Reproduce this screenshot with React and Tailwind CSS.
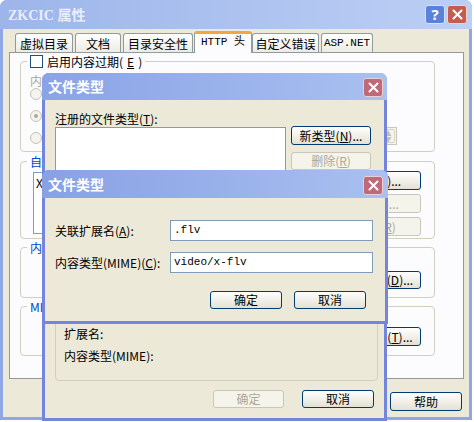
import React from 'react'

const ui = "font-['Noto_Sans_CJK_SC','Noto_Sans',sans-serif] text-[12px] leading-[13px]"

function Btn({ children, disabled, className = '' }) {
  return (
    <div
      className={`flex items-center justify-center rounded-[3px] border text-[12px] leading-none ${
        disabled
          ? 'border-[#c9c7ba] bg-[#f5f4ea] text-[#aca899]'
          : 'border-[#003c74] bg-gradient-to-b from-white to-[#e4e1d3] text-black'
      } ${className}`}
    >
      {children}
    </div>
  )
}

function CloseBox({ tone = 'mauve' }) {
  return (
    <div
      className={`flex h-[19px] w-[20px] items-center justify-center rounded-[3px] border ${
        tone === 'red' ? 'border-[#f1d2cc] bg-[#c65b52]' : 'border-[#e9cfd6] bg-[#bd6b78]'
      }`}
    >
      <svg width="11" height="11" viewBox="0 0 11 11">
        <path d="M1.5 1.5 L9.5 9.5 M9.5 1.5 L1.5 9.5" stroke="white" strokeWidth="2" strokeLinecap="round" />
      </svg>
    </div>
  )
}

function HelpBox() {
  return (
    <div className="flex h-[19px] w-[20px] items-center justify-center rounded-[3px] border border-[#d6e2fa] bg-[#5a82dc] text-[15px] font-bold leading-none text-white">
      ?
    </div>
  )
}

function Radio({ checked }) {
  return (
    <div className="flex h-[12px] w-[12px] items-center justify-center rounded-full border border-[#c4c2b8] bg-[#f4f3ee]">
      {checked && <div className="h-[4px] w-[4px] rounded-full bg-[#aca899]" />}
    </div>
  )
}

function Group({ title, className = '', children, titleClass = 'text-[#0046d5]' }) {
  return (
    <fieldset className={`ml-[10px] w-[415px] rounded-[4px] border border-[#d0d0bf] ${className}`}>
      <legend className={`ml-[6px] px-[3px] ${titleClass}`}>{title}</legend>
      {children}
    </fieldset>
  )
}

const tabs = [
  { label: '虚拟目录', w: 'w-[58px]', ml: 'ml-[12px]' },
  { label: '文档', w: 'w-[46px]', ml: 'ml-[2px]' },
  { label: '目录安全性', w: 'w-[70px]', ml: 'ml-[2px]' },
  { label: 'HTTP 头', w: 'w-[58px]', ml: 'ml-[1px]', active: true },
  { label: '自定义错误', w: 'w-[67px]', ml: 'ml-[0px]' },
  { label: 'ASP.NET', w: 'w-[52px]', ml: 'ml-[2px]' },
]

function OuterWindow() {
  return (
    <div className="absolute left-0 top-0 flex h-[420px] w-[472px] flex-col rounded-t-[7px] bg-[#8ea7e5]">
      <div className="flex h-[29px] items-center rounded-t-[7px] bg-gradient-to-r from-[#9db5ea] to-[#bccff4] pl-[8px] pr-[5px]">
        <span className="font-['Liberation_Serif','Noto_Sans_CJK_SC',serif] text-[14px] font-bold text-[#e9eefb]">
          ZKCIC <span className="font-['Noto_Sans_CJK_SC',sans-serif]">属性</span>
        </span>
        <div className="ml-auto flex gap-[2px]">
          <HelpBox />
          <CloseBox tone="red" />
        </div>
      </div>
      <div className={`mx-[3px] mb-[3px] flex flex-1 flex-col bg-[#ece9d8] ${ui}`}>
        {/* tabs */}
        <div className="mt-[2px] flex h-[22px] items-end">
          {tabs.map((t) =>
            t.active ? (
              <div
                key={t.label}
                className={`relative z-10 flex h-[22px] ${t.w} ${t.ml} items-start justify-center rounded-t-[3px] border-x border-t-[3px] border-x-[#919b9c] border-t-[#f2a73c] bg-[#fcfcfe] pt-[2px] font-['Liberation_Mono','Noto_Sans_CJK_SC',monospace] text-[11px]`}
              >
                {t.label}
              </div>
            ) : (
              <div
                key={t.label}
                className={`mb-[1px] flex h-[19px] ${t.w} ${t.ml} items-center justify-center rounded-t-[3px] border-x border-t border-[#919b9c] bg-gradient-to-b from-white to-[#ecebe5] ${
                  t.label === 'ASP.NET' ? "font-['Liberation_Mono',monospace] text-[11px]" : ''
                }`}
              >
                {t.label}
              </div>
            )
          )}
        </div>
        {/* panel */}
        <div className="-mt-px ml-[6px] h-[327px] w-[455px] border border-[#919b9c] bg-[#fcfcfe]">
          <Group
            className="mt-[2px] h-[97px]"
            titleClass="text-black"
            title={
              <span className="flex items-center gap-[4px]">
                <span className="h-[13px] w-[13px] border border-[#1c5180] bg-white" />
                启用内容过期(<u>E</u>)
              </span>
            }
          >
            <div className="pl-[9px] pt-[6px] text-[#aca899]">内容应在以下时间后过期:</div>
            <div className="flex flex-col gap-[10px] pl-[9px] pt-[1px]">
              <Radio />
              <Radio checked />
              <Radio />
            </div>
            <div className="-mt-[17px] ml-[338px] flex h-[18px] w-[38px] items-center border border-[#c9c7ba] bg-[#f5f4ea]">
              <span className="pl-[2px] text-[#aca899]">0</span>
              <div className="ml-auto mr-[1px] flex h-[14px] w-[14px] flex-col items-center justify-center rounded-[2px] border border-[#d8d5c6] text-[7px] leading-[6px] text-[#c2bfb2]">
                <span>▲</span>
                <span>▼</span>
              </div>
            </div>
          </Group>
          <Group className="mt-[3px] h-[84px]" title="自定义 HTTP 头">
            <div className="flex pl-[12px] pr-[13px] pt-[4px]">
              <div className="h-[62px] w-[280px] border border-[#7f9db9] bg-white pl-[2px] pt-[3px] text-black">
                X-Powered-By: ASP.NET
              </div>
              <div className="ml-auto flex flex-col gap-[4px] -mt-[1px]">
                <Btn className="h-[19px] w-[90px]">添加(<u>D</u>)...</Btn>
                <Btn disabled className="h-[19px] w-[90px]">编辑(<u>I</u>)...</Btn>
                <Btn disabled className="h-[19px] w-[90px]">删除(<u>R</u>)</Btn>
              </div>
            </div>
          </Group>
          <Group className="mt-[2px] h-[57px]" title="内容分级">
            <div className="flex pr-[13px] pt-[17px]">
              <Btn className="ml-auto h-[18px] w-[90px]">编辑分级(<u>D</u>)...</Btn>
            </div>
          </Group>
          <Group className="mt-[2px] h-[56px]" title="MIME 映射">
            <div className="flex pr-[13px] pt-[14px]">
              <Btn className="ml-auto h-[19px] w-[90px]">文件类型(<u>T</u>)...</Btn>
            </div>
          </Group>
        </div>
        <div className="mt-[13px] flex justify-end gap-[6px] pr-[7px]">
          <Btn className="h-[19px] w-[72px]">确定</Btn>
          <Btn className="h-[19px] w-[72px]">取消</Btn>
          <Btn className="h-[19px] w-[72px]">帮助</Btn>
        </div>
      </div>
    </div>
  )
}

function MiddleWindow() {
  return (
    <div className="absolute left-[42px] top-[73px] flex h-[348px] w-[345px] flex-col rounded-t-[7px] bg-[#7486dc]">
      <div className="flex h-[27px] items-center rounded-t-[7px] bg-gradient-to-r from-[#8aa3e6] to-[#a9c0f0] pl-[6px] pr-[4px]">
        <span className="font-['Noto_Sans_CJK_SC',sans-serif] text-[14px] font-bold text-white">文件类型</span>
        <div className="ml-auto mt-[1px]">
          <CloseBox />
        </div>
      </div>
      <div className={`mx-[3px] mb-[3px] flex flex-1 flex-col bg-[#ece9d8] ${ui}`}>
        <div className="pl-[10px] pt-[12px]">
          注册的文件类型(<u>T</u>):
        </div>
        <div className="mt-[2px] flex pl-[10px]">
          <div className="h-[80px] w-[231px] border border-[#7f9db9] bg-white" />
          <div className="-mt-px ml-[5px] flex flex-col gap-[7px]">
            <Btn className="h-[19px] w-[80px]">新类型(<u>N</u>)...</Btn>
            <Btn disabled className="h-[18px] w-[80px]">删除(<u>R</u>)</Btn>
          </div>
        </div>
        <div className="ml-[10px] mt-[8px] flex h-[166px] w-[323px] flex-col justify-end gap-[9px] rounded-[4px] border border-[#d0d0bf] pb-[18px] pl-[8px]">
          <div>扩展名:</div>
          <div>内容类型(MIME):</div>
        </div>
        <div className="mt-[9px] flex">
          <Btn disabled className="ml-[168px] h-[18px] w-[71px]">确定</Btn>
          <Btn className="ml-[18px] h-[18px] w-[72px]">取消</Btn>
        </div>
      </div>
    </div>
  )
}

function FrontWindow() {
  return (
    <div className="absolute left-[42px] top-[170px] flex h-[154px] w-[346px] flex-col rounded-t-[7px] bg-[#7486dc]">
      <div className="flex h-[28px] items-center rounded-t-[7px] bg-gradient-to-r from-[#88a1e4] to-[#a9c0f0] pl-[6px] pr-[5px]">
        <span className="font-['Noto_Sans_CJK_SC',sans-serif] text-[14px] font-bold text-white">文件类型</span>
        <div className="ml-auto mt-[3px]">
          <CloseBox />
        </div>
      </div>
      <div className={`mx-[3px] mb-[3px] flex flex-1 flex-col bg-[#ece9d8] ${ui}`}>
        <div className="mt-[22px] flex items-center">
          <div className="w-[125px] pl-[10px]">
            关联扩展名(<u>A</u>):
          </div>
          <div className="flex h-[21px] w-[203px] items-center border border-[#7f9db9] bg-white pl-[3px] font-['Liberation_Mono',monospace] text-[11px]">
            .flv
          </div>
        </div>
        <div className="mt-[11px] flex items-center">
          <div className="w-[125px] pl-[10px]">
            内容类型(MIME)(<u>C</u>):
          </div>
          <div className="flex h-[21px] w-[203px] items-center border border-[#7f9db9] bg-white pl-[3px] font-['Liberation_Mono',monospace] text-[11px]">
            video/x-flv
          </div>
        </div>
        <div className="mt-[18px] flex">
          <Btn className="ml-[165px] h-[18px] w-[72px]">确定</Btn>
          <Btn className="ml-[12px] h-[18px] w-[72px]">取消</Btn>
        </div>
      </div>
    </div>
  )
}

export default function App() {
  return (
    <div className="relative h-[422px] w-[474px] overflow-hidden bg-white">
      <OuterWindow />
      <MiddleWindow />
      <FrontWindow />
    </div>
  )
}
